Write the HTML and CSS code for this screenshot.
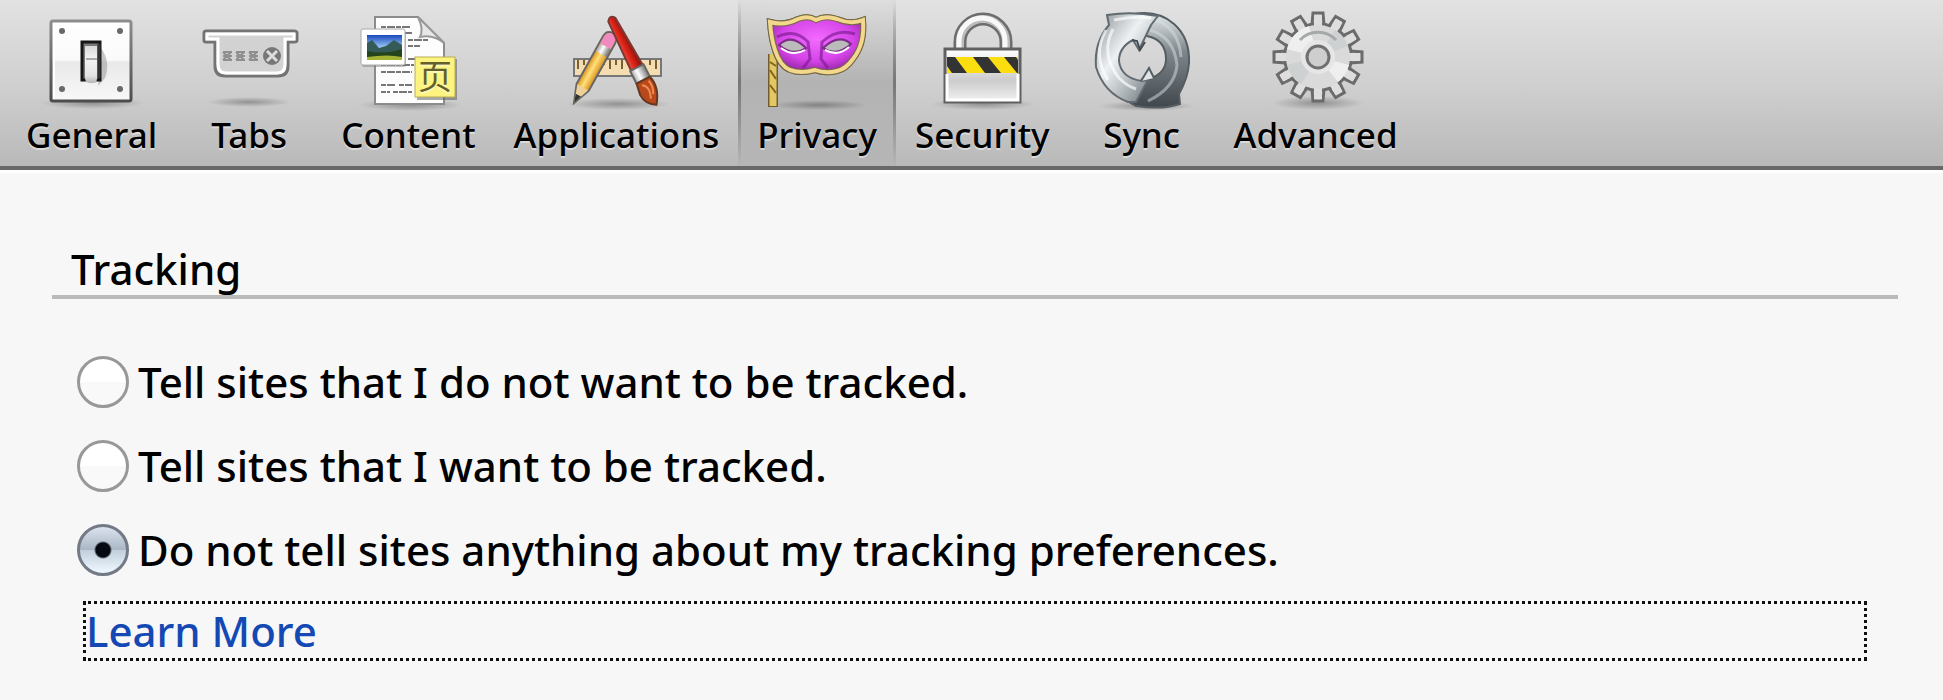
FILE: index.html
```html
<!DOCTYPE html>
<html lang="en">
<head>
<meta charset="utf-8">
<title>Privacy</title>
<link rel="stylesheet" href="styles.css">
</head>
<body>
<nav class="toolbar" aria-label="Preference panes">
  <button class="pane" type="button">
    <svg class="icon" viewBox="-54 0 108 116" aria-hidden="true">
      <defs>
        <linearGradient id="plate" x2="0" y2="1"><stop offset="0" stop-color="#fff"/><stop offset=".48" stop-color="#fafafa"/><stop offset=".52" stop-color="#e9e9e9"/><stop offset="1" stop-color="#f8f8f8"/></linearGradient>
        <linearGradient id="frame" x2="0" y2="1"><stop offset="0" stop-color="#8d8d8d"/><stop offset="1" stop-color="#4c4c4c"/></linearGradient>
        <linearGradient id="lever" x2="0" y2="1"><stop offset="0" stop-color="#d8d8d8"/><stop offset=".35" stop-color="#f4f4f4"/><stop offset=".8" stop-color="#e4e4e4"/><stop offset="1" stop-color="#b5b5b5"/></linearGradient>
        <radialGradient id="shade"><stop offset="0" stop-color="#000" stop-opacity=".28"/><stop offset="1" stop-color="#000" stop-opacity="0"/></radialGradient>
      </defs>
      <ellipse cx="0" cy="103" rx="52" ry="6" fill="url(#shade)"/>
      <rect x="-41" y="21" width="80" height="80" rx="2" fill="url(#plate)" stroke="url(#frame)" stroke-width="3"/>
      <path d="M-38 99V24H36" fill="none" stroke="#fff" stroke-width="2"/>
      <g fill="#686868"><circle cx="-30" cy="31" r="3"/><circle cx="28" cy="31" r="3"/><circle cx="-30" cy="89" r="3"/><circle cx="28" cy="89" r="3"/></g>
      <path d="M9 48Q19 62 13 78L6 86Z" fill="#888" opacity=".45"/>
      <rect x="-10" y="42" width="18" height="38" fill="#777" stroke="#161616" stroke-width="3"/>
      <path d="M-7 46H5V78Q5 83 2 83H-3Q-7 82-7 78Z" fill="url(#lever)"/>
      <path d="M-6 59H5" stroke="#aaa" stroke-width="2"/><path d="M7 44V78" stroke="#333" stroke-width="3"/>
    </svg>
    <span class="name">General</span>
  </button>
  <button class="pane" type="button">
    <svg class="icon" viewBox="-54 0 108 116" aria-hidden="true">
      <ellipse cx="0" cy="102" rx="42" ry="5" fill="url(#shade)"/>
      <path d="M-43 31H45Q48 31 48 33V40Q48 42 45 42H39V66Q39 76 29 76H-24Q-34 76-34 66V42H-43Q-45 42-45 40V33Q-45 31-43 31Z" fill="#dadada" stroke="#737373" stroke-width="3"/>
      <path d="M-42 34H45V39H36V64Q36 73 28 73H-23Q-31 73-31 64V39H-42Z" fill="#d2d2d2" stroke="#fff" stroke-width="3"/>
      <g fill="none" stroke="#8f8f8f" stroke-width="2"><path id="cross" d="M-26 52l8 8m0-8l-8 8M-26 52h9M-26 60h9M-26 56h9"/><use href="#cross" x="13"/><use href="#cross" x="26"/></g>
      <circle cx="23" cy="56" r="9" fill="#777"/><path d="M18 51l10 10m0-10l-10 10" stroke="#ddd" stroke-width="3"/>
    </svg>
    <span class="name">Tabs</span>
  </button>
  <button class="pane" type="button">
    <svg class="icon" viewBox="-54 0 108 116" aria-hidden="true">
      <defs><linearGradient id="sky" x2="0" y2="1"><stop offset="0" stop-color="#1749bd"/><stop offset=".5" stop-color="#9ec8f5"/></linearGradient></defs>
      <ellipse cx="2" cy="105" rx="52" ry="6" fill="url(#shade)"/>
      <path d="M-33 17H10L36 43V104H-33Z" fill="#fdfdfd" stroke="#8c8c8c" stroke-width="2"/>
      <path d="M10 17Q16 29 12 37Q25 34 36 43Z" fill="#e7e7e7" stroke="#999" stroke-width="2"/>
      <g stroke="#777" stroke-width="2"><path d="M-27 27H2M-27 33H2M0 40H21M0 46H12M-27 65H6M-27 72H4M-27 85H-13M-9 85H4M-27 92H-18M-15 92H4" stroke-dasharray="5 1 8 1"/><path d="M0 33H4M0 59H9M-27 59H-10"/></g>
      <rect x="-46" y="31" width="44" height="36" rx="2" fill="#777" opacity=".45"/>
      <rect x="-47" y="29" width="44" height="36" rx="2" fill="#fff" stroke="#aaa" stroke-width="1"/>
      <path d="M-41 35H-6V60H-41Z" fill="url(#sky)"/>
      <path d="M-41 43L-36 40L-29 48L-22 46L-14 40L-6 45V56H-41Z" fill="#355b59"/>
      <path d="M-41 51Q-23 55-6 49V60H-41Z" fill="#23441c"/><path d="M-41 57Q-20 54-6 57V60H-41Z" fill="#a5b332"/>
      <rect x="9" y="59" width="40" height="41" fill="#555" opacity=".5"/>
      <rect x="7" y="57" width="40" height="40" fill="#fdf37f" stroke="#b7ad59" stroke-width="1"/>
      <text class="note" x="27" y="89" text-anchor="middle">页</text>
    </svg>
    <span class="name">Content</span>
  </button>
  <button class="pane" type="button">
    <svg class="icon" viewBox="-54 0 108 116" aria-hidden="true">
      <defs>
        <linearGradient id="pencil"><stop offset="0" stop-color="#d98e16"/><stop offset=".45" stop-color="#ffe07a"/><stop offset="1" stop-color="#d9901b"/></linearGradient>
        <linearGradient id="handle"><stop offset="0" stop-color="#f04b3c"/><stop offset=".4" stop-color="#dd2418"/><stop offset="1" stop-color="#86100b"/></linearGradient>
        <linearGradient id="ferrule"><stop offset="0" stop-color="#aaa"/><stop offset=".4" stop-color="#fff"/><stop offset="1" stop-color="#777"/></linearGradient>
      </defs>
      <ellipse cx="2" cy="104" rx="52" ry="6" fill="url(#shade)"/>
      <rect x="-42" y="59" width="87" height="17" fill="#f4ddb0" stroke="#777" stroke-width="2"/>
      <path d="M-38 60v9M-32 60v5M-26 60v9M-12 60v5M-6 60v9M0 60v5M6 60v9M12 60v5M18 60v9M34 60v5M40 60v9" stroke="#795f35" stroke-width="2"/>
      <g transform="translate(-42 103) rotate(29)">
        <path d="M0 0L-7-18V-72Q-7-80 0-80Q7-80 7-72V-18Z" fill="url(#pencil)" stroke="#666" stroke-width="2"/>
        <path d="M0 0L-6-18H6Z" fill="#eed09b"/><path d="M0 0L-3-9H3Z" fill="#333"/>
        <path d="M-6-65H6V-56H-6Z" fill="url(#ferrule)"/><path d="M-6-65V-72Q-6-79 0-79Q6-79 6-72V-65Z" fill="#f08ac0"/>
      </g>
      <g transform="translate(-5 18) rotate(-27)">
        <path d="M-4 2Q0-4 4 2L7 56H-6Z" fill="url(#handle)" stroke="#7b3933" stroke-width="2"/>
        <path d="M-7 56H8V70H-7Z" fill="url(#ferrule)" stroke="#666" stroke-width="2"/>
        <path d="M-7 70H8Q12 84 1 98Q-9 92-9 82Z" fill="#b9481b" stroke="#653822" stroke-width="2"/>
        <path d="M-3 74Q4 78-1 90M5 73Q7 80 3 87" fill="none" stroke="#ee8b4c" stroke-width="2"/>
      </g>
    </svg>
    <span class="name">Applications</span>
  </button>
  <button class="pane selected" type="button" aria-current="page">
    <svg class="icon" viewBox="-54 0 108 116" aria-hidden="true">
      <defs><radialGradient id="purple" cy=".4" r=".65"><stop offset="0" stop-color="#f36bff"/><stop offset=".6" stop-color="#d544e8"/><stop offset="1" stop-color="#872098"/></radialGradient></defs>
      <ellipse cx="2" cy="105" rx="48" ry="5" fill="url(#shade)"/>
      <path d="M-44 54V107" stroke="#705c2e" stroke-width="10"/><path d="M-44 54V106" stroke="#e2c865" stroke-width="7"/>
      <path d="M-47 70l6 9m-6 6l6 8m-6-31l6 4" stroke="#806520" stroke-width="2"/>
      <path id="mask" d="M-47 22Q-32 26-19 19Q-9 15-1 20Q8 15 20 19Q34 25 46 20Q48 44 36 59Q29 69 20 71Q8 74-2 70Q-16 74-27 70Q-37 66-42 50Q-46 38-47 22Z" fill="url(#purple)" stroke="#746943" stroke-width="6"/>
      <use href="#mask" class="trim"/>
      <path d="M-47 22Q-32 26-19 19Q-9 15-1 20Q8 15 20 19Q34 25 46 20Q48 44 36 59Q29 69 20 71Q8 74-2 70Q-16 74-27 70Q-37 66-42 50Q-46 38-47 22Z" fill="none" stroke="#f2d78d" stroke-width="4"/>
      <path d="M-40 37Q-22 28-9 42L-7 59L-14 68M38 34Q20 28 5 42L4 59L11 68" fill="none" stroke="#7d1a91" stroke-width="3" opacity=".65"/>
      <path d="M-38 45Q-26 33-11 48Q-24 57-38 45ZM34 44Q22 33 6 48Q20 57 34 44Z" fill="#bbb" stroke="#7c2c87" stroke-width="2"/>
      <path d="M-36 48Q-24 57-12 50M8 50Q21 57 32 47" fill="none" stroke="#fff" stroke-width="2"/>
    </svg>
    <span class="name">Privacy</span>
  </button>
  <button class="pane" type="button">
    <svg class="icon" viewBox="-54 0 108 116" aria-hidden="true">
      <defs><linearGradient id="steel" x2="0" y2="1"><stop offset="0" stop-color="#fff"/><stop offset=".6" stop-color="#ccc"/><stop offset="1" stop-color="#f3f3f3"/></linearGradient></defs>
      <ellipse cx="1" cy="104" rx="52" ry="6" fill="url(#shade)"/>
      <path d="M-22 52V42A23 23 0 0 1 24 42V52" fill="none" stroke="#6d6d6d" stroke-width="13"/>
      <path d="M-22 52V42A23 23 0 0 1 24 42V52" fill="none" stroke="#bcbcbc" stroke-width="8"/>
      <path d="M-23 52V41A23 23 0 0 1 23 41V52" fill="none" stroke="#f8f8f8" stroke-width="5"/>
      <rect x="-37" y="49" width="75" height="53" fill="url(#steel)" stroke="#606060" stroke-width="3"/>
      <path d="M-35 74V100H36V74" fill="none" stroke="#fff" stroke-width="3"/>
      <path d="M-35 57H36V73H-35Z" fill="#fbdd10"/>
      <path d="M-35 57H-27L-15 73H-30L-35 66ZM-9 57H6L19 73H3ZM22 57H34L36 60V73H35Z" fill="#333"/>
    </svg>
    <span class="name">Security</span>
  </button>
  <button class="pane" type="button">
    <svg class="icon" viewBox="-54 0 108 116" aria-hidden="true">
      <defs>
        <linearGradient id="light" x1="0" y1="0" x2="1" y2="1"><stop offset="0" stop-color="#858d92"/><stop offset=".4" stop-color="#eef1f3"/><stop offset=".7" stop-color="#a9b0b4"/><stop offset="1" stop-color="#596268"/></linearGradient>
        <linearGradient id="dark" x2="0" y2="1"><stop offset="0" stop-color="#e4e8ea"/><stop offset=".4" stop-color="#80888d"/><stop offset="1" stop-color="#3f474d"/></linearGradient>
      </defs>
      <ellipse cx="5" cy="106" rx="48" ry="5" fill="url(#shade)"/>
      <path d="M-8 14Q16 10 32 24Q48 38 47 63Q46 78 37 94L38 104Q20 110-6 106L-13 102L4 80L10 78Q24 72 24 59Q24 40 5 36L-2 34Z" fill="url(#dark)" stroke="#555d62" stroke-width="2"/>
      <path d="M-35 15Q-10 11 16 16L9 25L-3 50L-9 40Q-23 47-23 61Q-21 78 0 81L6 80L-6 102L-14 102Q-38 93-46 67Q-48 42-33 25Z" fill="url(#light)" stroke="#606a70" stroke-width="2"/>
      <path d="M-28 20Q-9 16 9 18M-36 30Q-50 55-34 80M-29 29Q-42 54-23 78Q-15 86-6 89" fill="none" stroke="#fff" stroke-width="3" opacity=".65"/>
      <path d="M14 20Q37 29 39 57M8 30Q32 37 35 65Q33 88 6 101" fill="none" stroke="#d6dfe4" stroke-width="3" opacity=".5"/>
      <path d="M-1 81L7 68L12 78" fill="#dfe3e5" stroke="#555d62" stroke-width="2"/>
      <path d="M-10 40l5 1l3 9l5-8" fill="none" stroke="#444c51" stroke-width="2"/>
    </svg>
    <span class="name">Sync</span>
  </button>
  <button class="pane" type="button">
    <svg class="icon" viewBox="-54 0 108 116" aria-hidden="true">
      <ellipse cx="2" cy="103" rx="46" ry="7" fill="url(#shade)"/>
      <g transform="translate(2 57)">
        <g fill="#ddd" stroke="#6b6b6b" stroke-width="3">
          <path id="tooth" d="M-6-32L-5-44H5L6-32V32L5 44H-5L-6 32Z"/>
          <use href="#tooth" transform="rotate(30)"/><use href="#tooth" transform="rotate(60)"/><use href="#tooth" transform="rotate(90)"/><use href="#tooth" transform="rotate(120)"/><use href="#tooth" transform="rotate(150)"/>
        </g>
        <circle r="35" fill="#6b6b6b"/>
        <g fill="#dedede"><path id="fill" d="M-4-30V-42H4V-30V30V42H-4V30Z"/><use href="#fill" transform="rotate(30)"/><use href="#fill" transform="rotate(60)"/><use href="#fill" transform="rotate(90)"/><use href="#fill" transform="rotate(120)"/><use href="#fill" transform="rotate(150)"/></g>
        <circle r="32" fill="#dadada"/>
        <path d="M0 0L-31-8A32 32 0 0 1-9-31ZM0 0L20 25A32 32 0 0 0 31 8Z" fill="#efefef"/>
        <path d="M0 0L-31 8A32 32 0 0 0-17 27ZM0 0L30-11A32 32 0 0 0 17-27Z" fill="#cdd1d1"/>
        <path d="M-18-17A25 25 0 0 1 18-17" fill="none" stroke="#a5a9a9" stroke-width="3"/>
        <circle r="17" fill="#e6e6e6"/><circle r="11" fill="#cecece" stroke="#707070" stroke-width="3"/>
      </g>
    </svg>
    <span class="name">Advanced</span>
  </button>
</nav>
<main class="content">
  <fieldset class="group">
    <legend class="heading">Tracking</legend>
    <div class="options">
      <label class="option" for="deny"><input class="radio" id="deny" type="radio" name="tracking">Tell sites that I do not want to be tracked.</label>
      <label class="option" for="allow"><input class="radio" id="allow" type="radio" name="tracking">Tell sites that I want to be tracked.</label>
      <label class="option" for="silent"><input class="radio" id="silent" type="radio" name="tracking" checked>Do not tell sites anything about my tracking preferences.</label>
    </div>
    <a class="learn" href="#">Learn More</a>
  </fieldset>
</main>
</body>
</html>
```
FILE: styles.css
```css
* { box-sizing: border-box; }

body {
  margin: 0;
  background: #f7f7f7;
  color: #000;
  font-family: "Noto Sans", "Open Sans", sans-serif;
  font-weight: 500;
}

.toolbar {
  display: flex;
  padding-left: 7px;
  background: linear-gradient(#e2e2e2, #d0d0d0 50%, #b9b9b9);
  border-bottom: 4px solid #686868;
  box-shadow: 0 3px #fff;
}

.pane {
  display: flex;
  flex-direction: column;
  align-items: center;
  min-width: 141px;
  padding: 0 19px 12px;
  border: 0;
  background: none;
  color: inherit;
  font: 500 35px/38px "Noto Sans", "Open Sans", sans-serif;
  text-shadow: 0 2px rgb(255 255 255 / 45%);
}

.selected {
  background:
    linear-gradient(transparent, #777 50%, transparent) left / 3px 100% no-repeat,
    linear-gradient(transparent, #777 50%, transparent) right / 3px 100% no-repeat,
    linear-gradient(rgb(0 0 0 / 2%), rgb(0 0 0 / 14%) 50%, rgb(0 0 0 / 2%));
}

.icon { width: 108px; height: 116px; }

.note {
  font: 34px "Noto Sans CJK SC", sans-serif;
  fill: #64602e;
}

.content { padding: 73px 45px 40px 52px; }

.group {
  min-width: 0;
  margin: 0;
  padding: 0;
  border: 0;
}

.heading {
  width: 100%;
  padding: 0 19px;
  border-bottom: 4px solid #bababa;
  font-size: 42px;
  line-height: 52px;
}

.options {
  display: flex;
  flex-direction: column;
  align-items: flex-start;
  gap: 32px;
  margin: 57px 0 25px 25px;
}

.option {
  display: flex;
  align-items: center;
  gap: 9px;
  font-size: 42px;
  line-height: 52px;
}

.radio {
  appearance: none;
  flex: none;
  width: 52px;
  height: 52px;
  margin: 0;
  border: 3px solid #989898;
  border-radius: 50%;
  background: linear-gradient(#fff 50%, #f9f9f9 50%);
}

.radio:checked {
  border-color: #747986;
  background:
    radial-gradient(circle, #050a12 7px, transparent 9px),
    linear-gradient(#dbe3ee, #a9b6c4 50%, #c3d0dc 51%, #eef8ff);
}

.learn {
  display: block;
  margin: 0 31px;
  border: 3px dotted #111;
  color: #1449b4;
  font-size: 42px;
  line-height: 54px;
  text-decoration: none;
}
```
